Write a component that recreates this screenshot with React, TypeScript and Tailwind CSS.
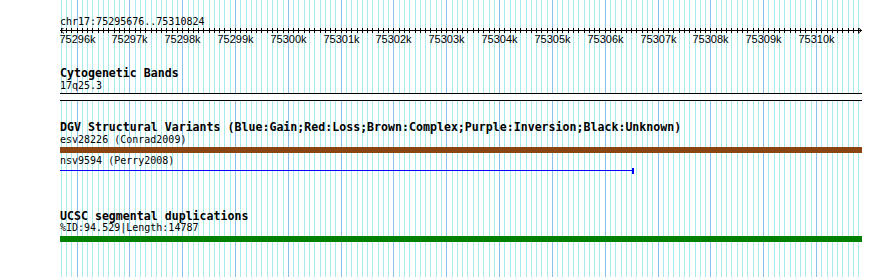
import React from "react";

const START = 75295676;
const END = 75310824;
const X0 = 60;
const W = 800;
const toX = (p: number) => X0 + ((p - START) * W) / (END - START);

const gridPositions: number[] = [];
for (let p = 75295700; p <= 75310800; p += 100) gridPositions.push(p);

const majors: number[] = [];
for (let p = 75296000; p <= 75310000; p += 1000) majors.push(p);

function Grid() {
  return (
    <svg className="absolute inset-0" width={890} height={277}>
      {gridPositions.map((p) => {
        const x = Math.floor(toX(p)) + 0.5;
        const major = p % 1000 === 0;
        return (
          <line
            key={p}
            x1={x}
            x2={x}
            y1={0}
            y2={277}
            stroke={major ? "#88c0ee" : "#a6ecec"}
            strokeWidth={1}
          />
        );
      })}
    </svg>
  );
}

function Ruler() {
  return (
    <svg width={890} height={18} className="block -ml-[60px]">
      <line x1={60} x2={862} y1={2.5} y2={2.5} stroke="#000" strokeWidth={1} />
      <polyline points="64,-0.5 60.5,2.5 64,5.5" fill="none" stroke="#000" strokeWidth={1} />
      <polyline points="858,-0.5 861.5,2.5 858,5.5" fill="none" stroke="#000" strokeWidth={1} />
      {gridPositions.map((p) => {
        const x = Math.floor(toX(p)) + 0.5;
        return <line key={p} x1={x} x2={x} y1={0} y2={5} stroke="#000" strokeWidth={1} />;
      })}
      {majors.map((p) => (
        <text
          key={p}
          x={Math.floor(toX(p)) + 0.5}
          y={15}
          textAnchor="middle"
          fontFamily="'Liberation Sans', Arial, sans-serif"
          fontSize={11}
          fill="#000"
        >
          {Math.round(p / 1000)}k
        </text>
      ))}
    </svg>
  );
}

export default function App() {
  return (
    <div className="relative w-[890px] h-[277px] overflow-hidden bg-white text-black font-['DejaVu_Sans_Mono',monospace]">
      <Grid />
      <div className="relative flex flex-col pl-[60px]">
        <div className="mt-[16px] h-[12px] text-[10px] leading-[12px]">chr17:75295676..75310824</div>
        <Ruler />

        <div className="mt-[21px] h-[13px] text-[11.6px] leading-[13px] font-bold">Cytogenetic Bands</div>
        <div className="h-[12px] text-[10px] leading-[12px]">17q25.3</div>
        <div className="mt-[1px] h-[8px] w-[802px] border-y border-black bg-white"></div>

        <div className="mt-[20px] h-[13px] text-[11.6px] leading-[13px] font-bold whitespace-nowrap">
          DGV Structural Variants (Blue:Gain;Red:Loss;Brown:Complex;Purple:Inversion;Black:Unknown)
        </div>
        <div className="h-[12px] text-[10px] leading-[12px]">esv28226 (Conrad2009)</div>
        <div className="mt-[1px] h-[6px] w-[802px] bg-[#8b4513]"></div>
        <div className="mt-[2px] h-[12px] text-[10px] leading-[12px]">nsv9594 (Perry2008)</div>
        <div className="mt-[1px] h-[6px] w-[574px] flex items-start">
          <div className="mt-[2px] h-[1px] flex-1 bg-[#0000ff]"></div>
          <div className="h-[6px] w-[2px] bg-[#0000ff]"></div>
        </div>

        <div className="mt-[36px] h-[12px] text-[11.6px] leading-[12px] font-bold">UCSC segmental duplications</div>
        <div className="h-[12px] text-[10px] leading-[12px]">%ID:94.529|Length:14787</div>
        <div className="mt-[2px] h-[6px] w-[802px] bg-[#008000]"></div>
      </div>
    </div>
  );
}
